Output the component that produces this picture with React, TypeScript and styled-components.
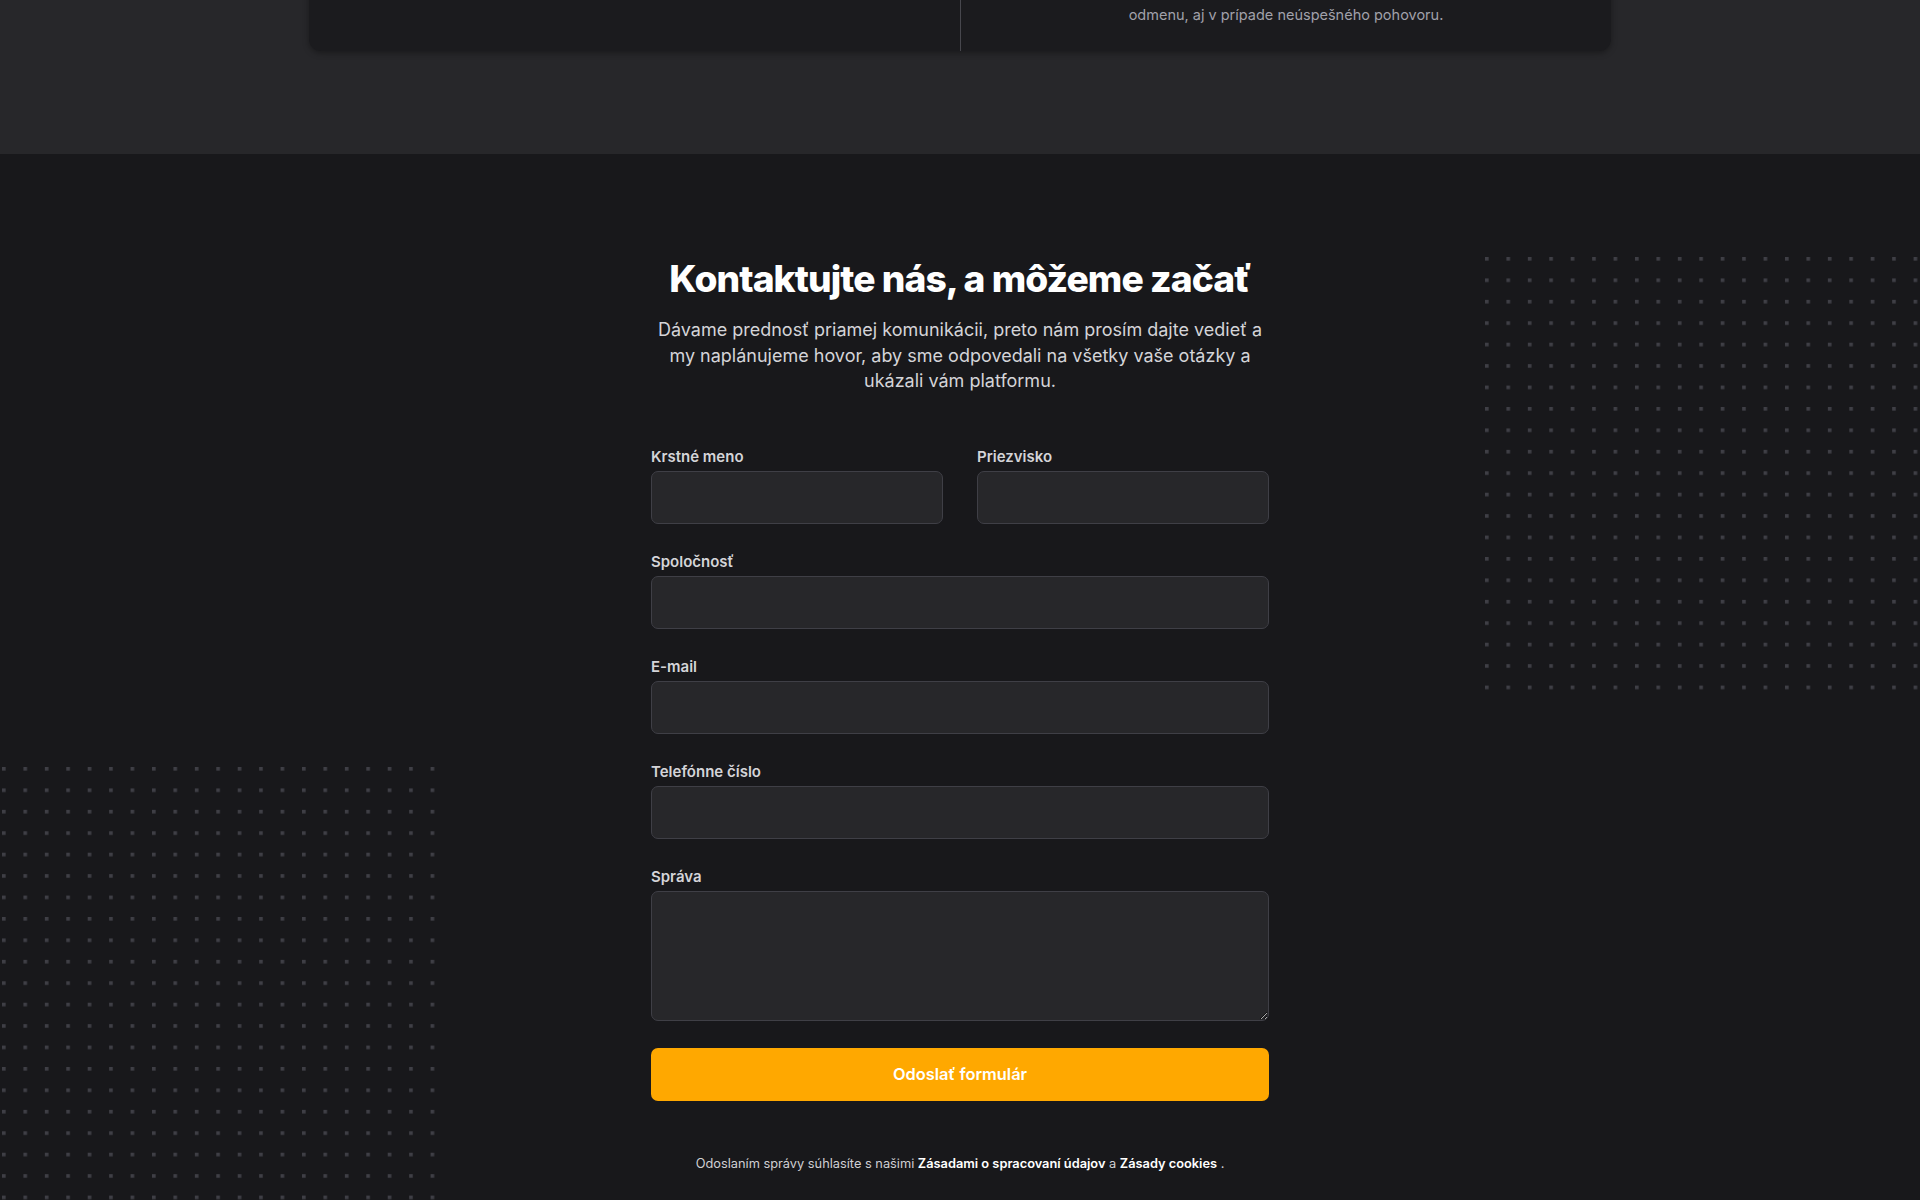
import React from "react";
import styled, { createGlobalStyle } from "styled-components";

const GlobalStyle = createGlobalStyle`
  html, body { margin: 0; padding: 0; background: #18181b; }
  body { font-family: Inter, "Noto Sans", sans-serif; overflow-x: hidden; -webkit-font-smoothing: antialiased; }
  * { box-sizing: border-box; }
`;

const Page = styled.div`
  margin-top: -77px;
`;

const TopSection = styled.section`
  background: #27272a;
  padding: 0 0 103px;
  display: flex;
  justify-content: center;
`;

const Card = styled.div`
  width: 1302px;
  background: #1b1b1e;
  border-radius: 12px;
  box-shadow: 0 2px 6px rgba(0, 0, 0, 0.35);
  display: grid;
  grid-template-columns: 1fr 1fr;
`;

const CardCol = styled.div<{ $divider?: boolean }>`
  padding: 32px 40px 24px;
  text-align: center;
  border-left: ${(p) => (p.$divider ? "1px solid #47474d" : "none")};
`;

const CardText = styled.p`
  margin: 0;
  font-size: 14.5px;
  line-height: 24px;
  color: #a1a1aa;
`;

const ContactSection = styled.section`
  position: relative;
  overflow: hidden;
  background: #18181b;
  padding: 103px 0 103px;
  display: flex;
  flex-direction: column;
  align-items: center;
`;

const Dots = styled.svg<{ $left: number; $top: number }>`
  position: absolute;
  left: ${(p) => p.$left}px;
  top: ${(p) => p.$top}px;
`;

const Intro = styled.div`
  width: 618px;
  text-align: center;
  position: relative;
`;

const Heading = styled.h2`
  margin: 0;
  font-size: 37.2px;
  line-height: 43px;
  font-weight: 800;
  letter-spacing: -0.025em;
  color: #ffffff;
`;

const Lead = styled.p`
  margin: 17px 0 0;
  font-size: 18px;
  line-height: 25.7px;
  color: #d4d4d8;
`;

const Form = styled.form`
  position: relative;
  margin-top: 51.5px;
  width: 618px;
  display: grid;
  grid-template-columns: 1fr 1fr;
  column-gap: 34px;
  row-gap: 27px;
`;

const Field = styled.div<{ $full?: boolean }>`
  display: flex;
  flex-direction: column;
  gap: 3px;
  grid-column: ${(p) => (p.$full ? "1 / -1" : "auto")};
`;

const Label = styled.label`
  font-size: 15px;
  line-height: 22px;
  font-weight: 600;
  color: #d4d4d8;
`;

const Input = styled.input`
  height: 53px;
  width: 100%;
  background: #27272a;
  border: 1px solid #3f3f46;
  border-radius: 7px;
  padding: 0 14px;
  font: inherit;
  color: #fff;
  outline: none;
`;

const TextArea = styled.textarea`
  height: 130px;
  width: 100%;
  background: #27272a;
  border: 1px solid #3f3f46;
  border-radius: 7px;
  padding: 10px 14px;
  font: inherit;
  color: #fff;
  outline: none;
  display: block;
`;

const SubmitButton = styled.button`
  grid-column: 1 / -1;
  height: 53px;
  border: none;
  border-radius: 7px;
  background: #ffa800;
  color: #ffffff;
  font-family: Inter, sans-serif;
  font-size: 16.4px;
  font-weight: 600;
  cursor: pointer;
`;

const Consent = styled.p`
  grid-column: 1 / -1;
  margin: 25.5px 0 0;
  text-align: center;
  font-size: 12.8px;
  line-height: 22px;
  color: #cfcfd3;
`;

const Strong = styled.a`
  color: #ffffff;
  font-weight: 600;
  text-decoration: none;
`;

const DotPattern: React.FC<{ id: string; left: number; top: number }> = ({ id, left, top }) => (
  <Dots $left={left} $top={top} width={433} height={433} aria-hidden="true">
    <defs>
      <pattern id={id} x={0} y={0} width={21.43} height={21.43} patternUnits="userSpaceOnUse">
        <rect x={0} y={0} width={3.6} height={3.6} fill="#3f3f46" />
      </pattern>
    </defs>
    <rect width={433} height={433} fill={`url(#${id})`} />
  </Dots>
);

export default function App() {
  return (
    <Page>
      <GlobalStyle />
      <TopSection>
        <Card>
          <CardCol>
            <CardText>Kandidátov starostlivo preveríme, vyberieme</CardText>
            <CardText>a pripravíme ich na pohovor s vaším tímom.</CardText>
          </CardCol>
          <CardCol $divider>
            <CardText>Za každého odporučeného kandidáta, ktorý sa</CardText>
            <CardText>zúčastní pohovoru, dostanete finančnú aj inú</CardText>
            <CardText>odmenu, aj v prípade neúspešného pohovoru.</CardText>
          </CardCol>
        </Card>
      </TopSection>
      <ContactSection>
        <DotPattern id="dots-right" left={1485} top={103} />
        <DotPattern id="dots-left" left={2} top={613} />
        <Intro>
          <Heading>Kontaktujte nás, a môžeme začať</Heading>
          <Lead>
            Dávame prednosť priamej komunikácii, preto nám prosím dajte vedieť a my naplánujeme
            hovor, aby sme odpovedali na všetky vaše otázky a ukázali vám platformu.
          </Lead>
        </Intro>
        <Form onSubmit={(e) => e.preventDefault()}>
          <Field>
            <Label htmlFor="first-name">Krstné meno</Label>
            <Input id="first-name" type="text" />
          </Field>
          <Field>
            <Label htmlFor="last-name">Priezvisko</Label>
            <Input id="last-name" type="text" />
          </Field>
          <Field $full>
            <Label htmlFor="company">Spoločnosť</Label>
            <Input id="company" type="text" />
          </Field>
          <Field $full>
            <Label htmlFor="email">E-mail</Label>
            <Input id="email" type="email" />
          </Field>
          <Field $full>
            <Label htmlFor="phone">Telefónne číslo</Label>
            <Input id="phone" type="tel" />
          </Field>
          <Field $full>
            <Label htmlFor="message">Správa</Label>
            <TextArea id="message" rows={4} />
          </Field>
          <SubmitButton type="submit">Odoslať formulár</SubmitButton>
          <Consent>
            Odoslaním správy súhlasíte s našimi <Strong href="#">Zásadami o spracovaní údajov</Strong> a{" "}
            <Strong href="#">Zásady cookies</Strong> .
          </Consent>
        </Form>
      </ContactSection>
    </Page>
  );
}
